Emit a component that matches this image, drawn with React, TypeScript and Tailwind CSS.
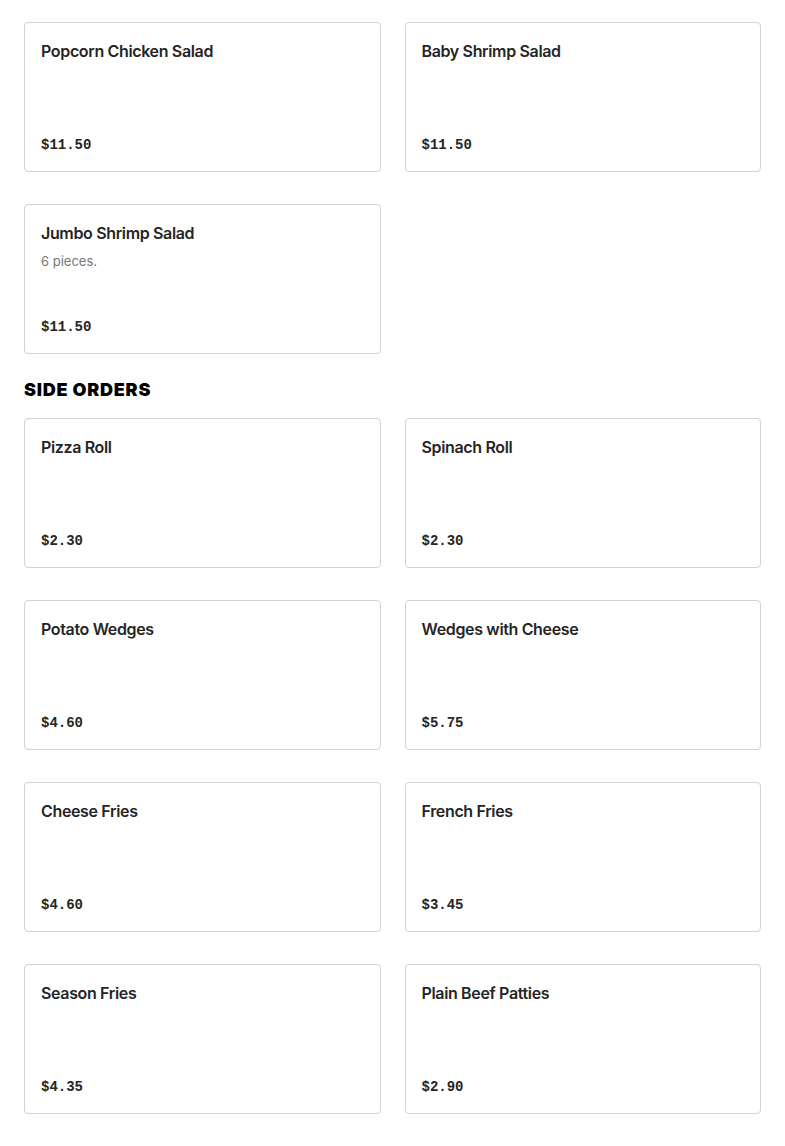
import React from "react";

type Item = { name: string; price: string; desc?: string };

const salads: Item[] = [
  { name: "Popcorn Chicken Salad", price: "$11.50" },
  { name: "Baby Shrimp Salad", price: "$11.50" },
  { name: "Jumbo Shrimp Salad", price: "$11.50", desc: "6 pieces." },
];

const sides: Item[] = [
  { name: "Pizza Roll", price: "$2.30" },
  { name: "Spinach Roll", price: "$2.30" },
  { name: "Potato Wedges", price: "$4.60" },
  { name: "Wedges with Cheese", price: "$5.75" },
  { name: "Cheese Fries", price: "$4.60" },
  { name: "French Fries", price: "$3.45" },
  { name: "Season Fries", price: "$4.35" },
  { name: "Plain Beef Patties", price: "$2.90" },
];

function Card({ item }: { item: Item }) {
  return (
    <div className="flex h-[150px] flex-col justify-between rounded-[4px] border border-[#d3d3d3] bg-white p-4">
      <div>
        <div className="text-[16px] font-semibold leading-6 text-[#252525] [font-family:Inter,sans-serif] tracking-[-0.35px]">
          {item.name}
        </div>
        {item.desc && (
          <div className="mt-[6px] text-[13px] leading-5 text-[#767676] [font-family:Inter,sans-serif]">
            {item.desc}
          </div>
        )}
      </div>
      <div className="text-[14px] font-bold leading-5 text-[#252525] [font-family:'Liberation_Mono',monospace]">
        {item.price}
      </div>
    </div>
  );
}

export default function App() {
  return (
    <div className="min-h-[1146px] bg-white px-6 pt-[22px]">
      <div className="grid grid-cols-2 gap-x-6 gap-y-8">
        {salads.map((s) => (
          <Card key={s.name} item={s} />
        ))}
      </div>
      <h2 className="mt-6 mb-4 text-[18px] font-black leading-6 tracking-[0.75px] text-black [font-family:Inter,sans-serif]">
        SIDE ORDERS
      </h2>
      <div className="grid grid-cols-2 gap-x-6 gap-y-8">
        {sides.map((s) => (
          <Card key={s.name} item={s} />
        ))}
      </div>
    </div>
  );
}
